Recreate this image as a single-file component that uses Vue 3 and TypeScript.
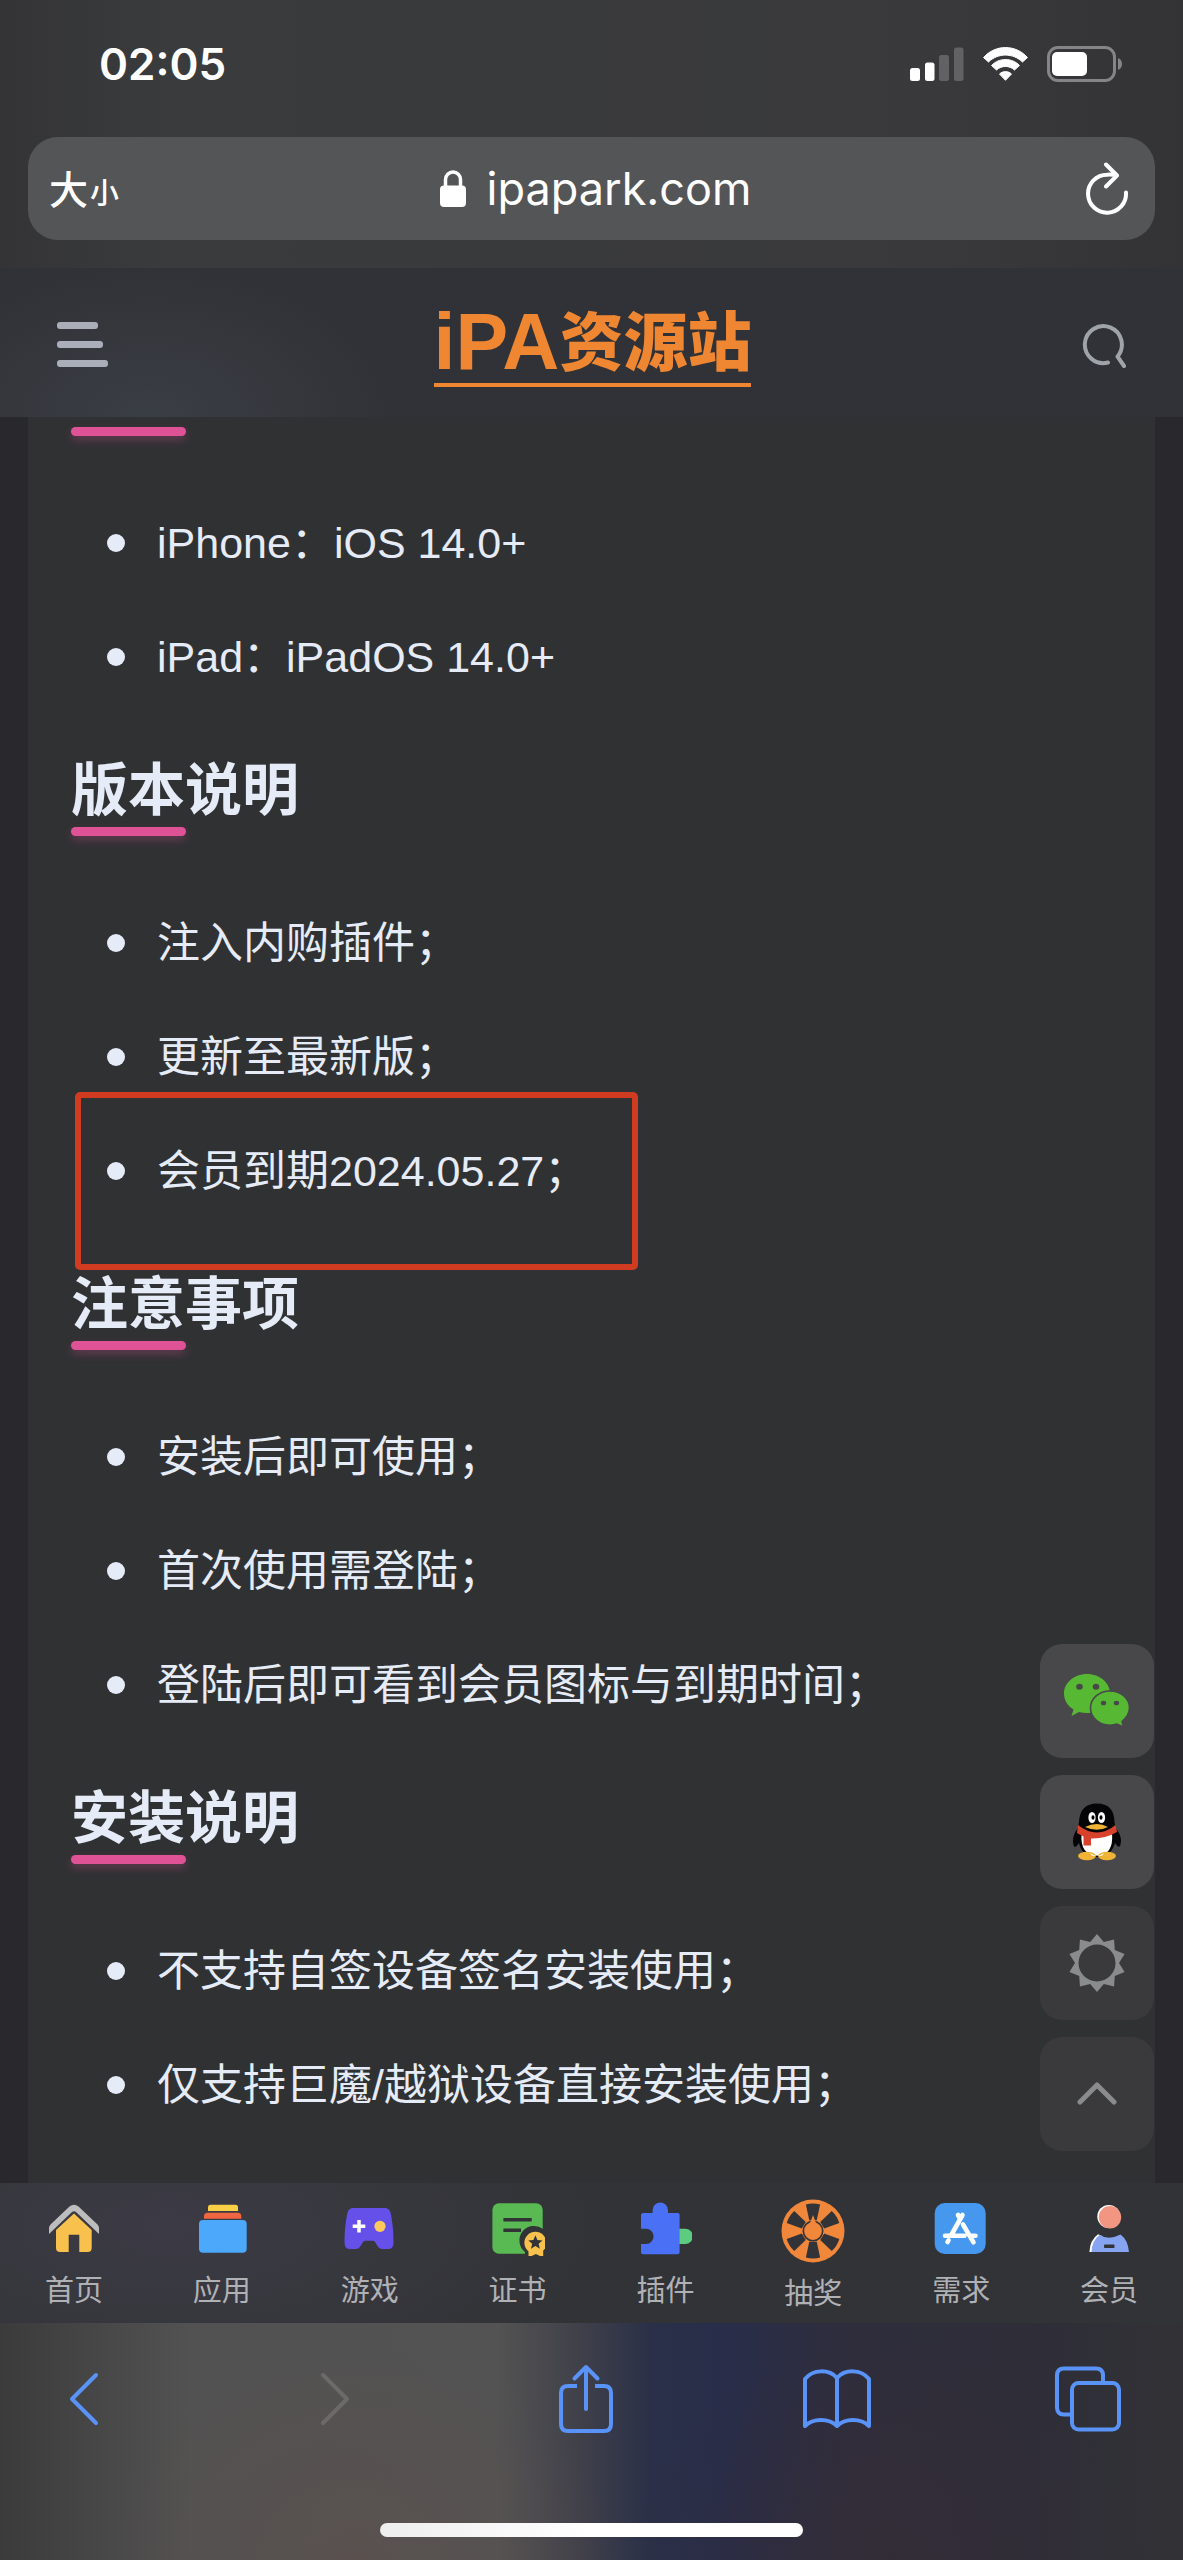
<script setup lang="ts">
interface Item {
  text: string
  marked?: boolean
}

interface Section {
  title: string
  items: Item[]
}

const requirements: string[] = ['iPhone：iOS 14.0+', 'iPad：iPadOS 14.0+']

const sections: Section[] = [
  {
    title: '版本说明',
    items: [
      { text: '注入内购插件；' },
      { text: '更新至最新版；' },
      { text: '会员到期2024.05.27；', marked: true },
    ],
  },
  {
    title: '注意事项',
    items: [
      { text: '安装后即可使用；' },
      { text: '首次使用需登陆；' },
      { text: '登陆后即可看到会员图标与到期时间；' },
    ],
  },
  {
    title: '安装说明',
    items: [
      { text: '不支持自签设备签名安装使用；' },
      { text: '仅支持巨魔/越狱设备直接安装使用；' },
    ],
  },
]

function polar(cx: number, cy: number, r: number, deg: number): string {
  const a = (deg * Math.PI) / 180
  return `${(cx + r * Math.sin(a)).toFixed(2)} ${(cy - r * Math.cos(a)).toFixed(2)}`
}

function star(cx: number, cy: number, outer: number, inner: number, points: number): string {
  const step = 180 / points
  const pts: string[] = []
  for (let i = 0; i < points * 2; i++) {
    pts.push(polar(cx, cy, i % 2 === 0 ? outer : inner, i * step))
  }
  return `M${pts.join('L')}Z`
}

// Ten-pointed sun with a round hole
const sun = `${star(29, 29, 29, 22, 10)}M29 10.5a18.5 18.5 0 1 0 0 37a18.5 18.5 0 1 0 0-37Z`
const badgeStar = star(44.4, 40.7, 7.5, 3.4, 5)

// Openings between the spokes of the prize wheel
const openings = [0, 58, 122, 180, 238, 302].map(
  (a) =>
    `M${polar(32, 32, 11.5, a - 19)}L${polar(32, 32, 27.5, a - 15)}A27.5 27.5 0 0 1 ${polar(32, 32, 27.5, a + 15)}L${polar(32, 32, 11.5, a + 19)}Z`,
).join('')
</script>

<template>
  <div class="page">
    <div class="browser-top">
      <div class="status">
        <span class="time">02:05</span>
        <div class="status-icons">
          <svg width="54" height="36" viewBox="0 0 54 36" fill="#fff">
            <rect x="0" y="22" width="10" height="13" rx="2.5" />
            <rect x="15" y="16.500" width="9.500" height="18.500" rx="2.500" />
            <rect x="29" y="9" width="10" height="26" rx="2.500" fill="#626264" />
            <rect x="44" y="1.500" width="9.500" height="33.500" rx="2.500" fill="#626264" />
          </svg>
          <svg width="45" height="36" viewBox="0 -1 45 36" fill="#fff" stroke="#fff" stroke-width="1" stroke-linejoin="round">
            <path d="M.5 10.500C12.500-2.800 32.500-2.800 44.500 10.500L39.500 15C30 5.800 15 5.800 5.500 15Z" />
            <path d="M8.500 18.500C16 10.500 29 10.500 36.500 18.500L31.500 23C26.500 18.300 18.500 18.300 13.500 23Z" />
            <path d="M16.500 27C20 23.800 25 23.800 28.500 27L22.500 33.300Z" />
          </svg>
          <svg width="75" height="36" viewBox="0 0 75 36">
            <rect x="1.500" y="1.500" width="66" height="33" rx="9.500" fill="none" stroke="#858587" stroke-width="3" />
            <rect x="5" y="6" width="35" height="24" rx="5" fill="#fff" />
            <path d="M71 12Q75 13.500 75 18Q75 22.500 71 24Z" fill="#858587" />
          </svg>
        </div>
      </div>
      <div class="address">
        <button class="text-size" type="button"><span class="large">大</span><span class="small">小</span></button>
        <button class="host" type="button">
          <svg width="26" height="37" viewBox="0 0 26 37">
            <rect y="15.500" width="26" height="21.500" rx="4" fill="#fff" />
            <path d="M5.500 17V9.500a7.500 7.500 0 0 1 15 0V17" fill="none" stroke="#fff" stroke-width="3.500" />
          </svg>
          <span>ipapark.com</span>
        </button>
        <button class="reload" type="button" aria-label="刷新">
          <svg width="44" height="54" viewBox="0 0 44 54" fill="none" stroke="#fff" stroke-width="4" stroke-linecap="round" stroke-linejoin="round">
            <path d="M41 30.500A19 19 0 1 1 22 12.700Q27 12.300 31 13.300M21 2.500L32 13.500L21 24.500" />
          </svg>
        </button>
      </div>
    </div>

    <header class="site-header">
      <button class="menu" type="button" aria-label="菜单"><i></i><i></i><i></i></button>
      <a class="logo" href="#"><span class="logo-latin">iPA</span><span class="logo-han">资源站</span></a>
      <button class="search" type="button" aria-label="搜索">
        <svg width="46" height="46" viewBox="0 0 46 46" fill="none" stroke="#9fa4ab" stroke-width="4" stroke-linecap="round" stroke-linejoin="round">
          <path d="M26 40.500A18.500 18.500 0 1 1 35.500 34.500L42 44" />
        </svg>
      </button>
    </header>

    <main class="body">
      <article class="card">
        <section>
          <div class="rule"></div>
          <ul>
            <li v-for="item in requirements" :key="item">{{ item }}</li>
          </ul>
        </section>
        <section v-for="section in sections" :key="section.title">
          <h2>{{ section.title }}</h2>
          <ul>
            <li v-for="item in section.items" :key="item.text" :class="{ marked: item.marked }">{{ item.text }}</li>
          </ul>
        </section>
      </article>

      <aside class="floating">
        <button type="button" aria-label="微信">
          <svg width="66" height="54" viewBox="0 0 66 54">
            <path d="M23 0C36 0 46 9 46 19.500S36 39 23 39Q19 39 15 38L7.500 42L9.500 35.500C3.500 32 0 26 0 19.500C0 9 10 0 23 0Z" fill="#57b933" />
            <ellipse cx="15.500" cy="12.700" rx="3.300" ry="3" fill="#48484a" />
            <ellipse cx="32" cy="12.700" rx="3.300" ry="3" fill="#48484a" />
            <path d="M46 17C57 17 65.500 24.500 65.500 34Q65.500 41 58 47.500L59.500 53L53 50Q50 51.200 46 51.200C35 51.200 26.500 43.500 26.500 34S35 17 46 17Z" fill="#57b933" stroke="#48484a" stroke-width="1.600" />
            <ellipse cx="39.500" cy="29" rx="2.700" ry="2.300" fill="#48484a" />
            <ellipse cx="52.500" cy="29" rx="2.700" ry="2.300" fill="#48484a" />
          </svg>
        </button>
        <button type="button" aria-label="QQ">
          <svg width="48" height="58" viewBox="0 0 48 58">
            <path d="M5 25Q0 31 0 38Q0 43 2 44Q4 43 6 40Q9 54 24 54Q38 54 42 40Q44 43 46 44Q48 42 48 38Q48 31 42.500 25L41.500 19Q41 .500 24 .500Q7 .500 6 19Z" fill="#050507" />
            <path d="M8.500 31Q24 36 39 30Q41 52 24 52.500Q7 52 8.500 31Z" fill="#fff" />
            <ellipse cx="14" cy="53" rx="9" ry="4.200" fill="#efb336" />
            <ellipse cx="34" cy="53" rx="9" ry="4.200" fill="#efb336" />
            <path d="M17 50Q24 55 31 50L29 52.800H19Z" fill="#fff" />
            <ellipse cx="19" cy="14.500" rx="3.600" ry="5.500" fill="#fff" />
            <ellipse cx="28.500" cy="14.500" rx="3.600" ry="5.500" fill="#fff" />
            <ellipse cx="20" cy="14.500" rx="1.500" ry="2.200" />
            <ellipse cx="28" cy="14.500" rx="1.500" ry="2.200" />
            <path d="M12 24Q24 18 35 24Q24 29.500 12 24Z" fill="#efb336" />
            <path d="M5 22Q24 37 42.500 22L44 29Q32 36 18 35.500V42.500H10.500V33.500L4 30Z" fill="#d8412c" />
          </svg>
        </button>
        <button class="dim" type="button" aria-label="切换主题">
          <svg width="58" height="58" viewBox="0 0 58 58"><path :d="sun" fill="#8a8b8d" fill-rule="evenodd" /></svg>
        </button>
        <button class="dim" type="button" aria-label="返回顶部">
          <svg width="40" height="24" viewBox="0 0 40 24" fill="none" stroke="#8a8b8d" stroke-width="5" stroke-linecap="round" stroke-linejoin="round">
            <path d="M3 20L20 3L37 20" />
          </svg>
        </button>
      </aside>
    </main>

    <nav class="tabs">
      <a href="#">
        <svg width="54" height="54" viewBox="0 0 54 54">
          <path d="M2 32V26Q2 24 3.500 22.500L22.500 4.500Q27 1 31.500 4.500L50.500 22.500Q52 24 52 26V32L29 10Q27 8.300 25 10Z" fill="#bdbdbd" />
          <path d="M27 11.500L44.700 28V46Q44.700 50 40.700 50H32.300V32.700H21.700V50H13Q9 50 9 46V28Z" fill="#f8c04c" />
        </svg>
        <span>首页</span>
      </a>
      <a href="#">
        <svg width="54" height="54" viewBox="0 0 54 54">
          <path d="M15.500 2.700H40.500Q43 2.700 43 5.500V9H13V5.500Q13 2.700 15.500 2.700Z" fill="#f9cf45" />
          <path d="M12.500 10.700H43Q46 10.700 46.300 14V16.700H9V14Q9.500 10.700 12.500 10.700Z" fill="#ef6640" />
          <rect x="4" y="18" width="47.700" height="32.700" rx="4" fill="#4ba8fb" />
        </svg>
        <span>应用</span>
      </a>
      <a href="#">
        <svg width="54" height="54" viewBox="0 0 54 54">
          <path d="M10 6H42Q46 6 47.500 10.500Q50.500 24 50.500 40Q50.500 47 46 47H38.500Q36 47 34.500 44L32 40Q31 38.700 29.500 38.700H22.500Q21 38.700 20 40L17.500 44Q16 47 13.500 47H6Q1.500 47 1.500 40Q1.500 24 4.500 10.500Q6 6 10 6Z" fill="#6550e9" />
          <path d="M16 18V30.600M9.700 24.300H22.300" stroke="#fff" stroke-width="3.500" />
          <circle cx="37" cy="24.300" r="5.600" fill="#fbc95c" />
        </svg>
        <span>游戏</span>
      </a>
      <a href="#">
        <svg width="54" height="54" viewBox="0 0 54 54">
          <rect x="1.400" y="1.300" width="50.300" height="50.400" rx="6.500" fill="#59b952" />
          <path d="M12.400 17.700H40.700M12.400 28.300H30" stroke="#323337" stroke-width="3.400" />
          <path d="M34 53V50A14 14 0 1 1 52 27V53Z" fill="#323337" />
          <path d="M37.500 47.500V55.500L44.900 52L52.200 55.500V47.500Z" fill="#f8c04c" />
          <circle cx="44.400" cy="40.700" r="11" fill="#f8c04c" />
          <path :d="badgeStar" fill="#323337" />
        </svg>
        <span>证书</span>
      </a>
      <a href="#">
        <svg width="54" height="54" viewBox="0 0 54 54">
          <path d="M41 26.700H47.300a7.650 7.650 0 0 1 0 15.300H41Z" fill="#5dcb80" />
          <path d="M5.500 11H14.600V8.300a7.700 7.700 0 0 1 15.400 0V11H39.600Q41.600 11 41.600 13V50.300Q41.600 52.300 39.600 52.300H5Q3 52.300 3 50.300V42H8a7.650 7.650 0 0 0 0-15.300H3V13Q3 11 5.500 11Z" fill="#4a70f5" />
        </svg>
        <span>插件</span>
      </a>
      <a href="#">
        <svg class="wheel" width="64" height="64" viewBox="0 0 64 64">
          <circle cx="32" cy="32" r="31.500" fill="#f0873a" />
          <path :d="openings" fill="#323337" />
          <circle cx="32" cy="32" r="9.700" fill="#f0873a" stroke="#323337" stroke-width="1.600" />
          <path d="M29 24L32 16L35 24Z" fill="#f0873a" />
        </svg>
        <span>抽奖</span>
      </a>
      <a href="#">
        <svg width="54" height="54" viewBox="0 0 54 54" fill="none" stroke="#fff" stroke-linecap="round">
          <rect x=".7" y="1" width="51" height="51" rx="10" fill="#4598ee" stroke="none" />
          <path d="M28.500 13L17 33.500M24 13L26 16.500M29 22.500L39.500 40.300M11 33.700H30.500M36 33.700H41.500M14.500 38.300L13.500 40" stroke-width="4.600" />
        </svg>
        <span>需求</span>
      </a>
      <a href="#">
        <svg width="54" height="54" viewBox="0 0 54 54">
          <circle cx="26.800" cy="14.500" r="11.500" fill="#fff" />
          <circle cx="28" cy="15.300" r="11.200" fill="#f29682" />
          <path d="M16 32.300Q8 38 7.400 50H30L20 34Z" fill="#fff" />
          <path d="M17.500 33Q27 38.500 38.500 32.500Q46 38 47 50H9.500Q10 38.500 17.500 33Z" fill="#87a4f1" />
          <rect x="22" y="42.600" width="10.500" height="3.500" rx=".8" fill="#323337" />
        </svg>
        <span>会员</span>
      </a>
    </nav>

    <footer class="browser-bottom">
      <div class="toolbar">
        <button type="button" aria-label="后退">
          <svg width="30" height="54" viewBox="0 0 30 54"><path d="M27 3L3 27L27 51" /></svg>
        </button>
        <button type="button" aria-label="前进" disabled>
          <svg width="30" height="54" viewBox="0 0 30 54"><path d="M3 3L27 27L3 51" /></svg>
        </button>
        <button type="button" aria-label="分享">
          <svg width="54" height="70" viewBox="0 0 54 70">
            <path d="M18 22H9Q2 22 2 29V60Q2 67 9 67H45Q52 67 52 60V29Q52 22 45 22H36" stroke-linecap="butt" />
            <path d="M27 45V3M15.500 14.500L27 3L38.500 14.500" />
          </svg>
        </button>
        <button type="button" aria-label="书签">
          <svg width="68" height="60" viewBox="0 0 68 60">
            <path d="M2 57V10C10 0 26 0 34 9C42 0 58 0 66 10V57C58 49 42 49 34 57C26 49 10 49 2 57ZM34 9V57" />
          </svg>
        </button>
        <button type="button" aria-label="标签页">
          <svg width="66" height="66" viewBox="0 0 66 66">
            <path d="M15 48.500H9Q2 48.500 2 41.500V9.500Q2 2.500 9 2.500H41Q48 2.500 48 9.500V15" stroke-linecap="butt" />
            <rect x="17" y="17" width="47" height="46.500" rx="6.500" />
          </svg>
        </button>
      </div>
      <div class="home-indicator"></div>
    </footer>
  </div>
</template>

<style>
body {
  margin: 0;
  background: #29282d;
}
</style>

<style scoped>
*,
*::before,
*::after {
  box-sizing: border-box;
}

button {
  margin: 0;
  padding: 0;
  border: 0;
  background: none;
  color: inherit;
  font: inherit;
}

a {
  color: inherit;
  text-decoration: none;
}

svg {
  display: block;
  flex: none;
}

.page {
  display: flex;
  flex-direction: column;
  min-height: 100vh;
  font-family: "Liberation Sans", "Noto Sans CJK SC", sans-serif;
  color: #e5ebf7;
  background: #29282d;
}

.browser-top {
  padding: 0 28px 28px;
  background: linear-gradient(90deg, #343436, #3a3b3d 14%, #39393b 80%, #333335);
  color: #fff;
}

.status {
  display: flex;
  align-items: center;
  justify-content: space-between;
  height: 137px;
  padding: 0 33px 9px 71px;
}

.time {
  font: 600 44px/56px Inter, sans-serif;
}

.status-icons {
  display: flex;
  align-items: center;
  gap: 19px;
}

.address {
  display: grid;
  grid-template-columns: 1fr auto 1fr;
  align-items: center;
  height: 103px;
  padding: 0 26px 0 21px;
  border-radius: 30px;
  background: #545557;
}

.text-size {
  display: flex;
  align-items: baseline;
  gap: 2px;
  justify-self: start;
  font-family: "Noto Sans CJK SC", sans-serif;
  font-weight: 500;
}

.large {
  font-size: 39px;
  line-height: 56px;
}

.small {
  font-size: 29px;
  line-height: 56px;
}

.host {
  display: flex;
  align-items: center;
  gap: 21px;
  padding-left: 13px;
  font: 400 45px/60px Inter, sans-serif;
}

.reload {
  justify-self: end;
}

.site-header {
  display: grid;
  grid-template-columns: 1fr auto 1fr;
  align-items: center;
  height: 149px;
  padding: 4px 55px 0 57px;
  background: radial-gradient(ellipse 240px 150px at 150px 100%, #3a3e45, #313237);
}

.menu {
  display: flex;
  flex-direction: column;
  gap: 12px;
  justify-self: start;
}

.menu i {
  width: 41px;
  height: 7px;
  border-radius: 3px;
  background: #a9aeb9;
}

.menu i:nth-child(2) {
  width: 46px;
}

.menu i:nth-child(3) {
  width: 51px;
}

.logo {
  display: flex;
  align-items: flex-start;
  height: 84px;
  border-bottom: 4px solid #ef8732;
  color: #ef8732;
}

.logo-latin {
  font-size: 79px;
  font-weight: 700;
  line-height: 78px;
}

.logo-han {
  font-family: "Noto Sans CJK SC", sans-serif;
  font-size: 64px;
  font-weight: 900;
  line-height: 68px;
}

.search {
  justify-self: end;
}

.body {
  position: relative;
  display: flex;
  flex: 1;
  padding: 0 28px;
}

.card {
  flex: 1;
  padding: 10px 43px 0;
  background: #303133;
}

.rule,
h2::after {
  display: block;
  width: 115px;
  height: 9px;
  border-radius: 5px;
  background: #df5396;
  box-shadow: 0 4px 8px rgba(223, 83, 150, 0.3);
}

h2 {
  position: relative;
  margin: 0;
  padding-bottom: 6px;
  font-size: 57px;
  font-weight: 700;
  line-height: 80px;
}

h2::after {
  content: "";
  position: absolute;
  bottom: 0;
  left: 0;
}

ul {
  display: flex;
  flex-direction: column;
  gap: 40px;
  margin: 0;
  padding: 70px 0 56px 36px;
  list-style: none;
}

li {
  position: relative;
  display: flex;
  align-items: center;
  gap: 32px;
  font-size: 43px;
  line-height: 74px;
}

li::before {
  content: "";
  flex: none;
  width: 18px;
  height: 18px;
  border-radius: 50%;
  background: #e5ebf7;
}

.marked::after {
  content: "";
  position: absolute;
  top: -42px;
  left: -32px;
  width: 563px;
  height: 178px;
  border: 6px solid #d13b22;
  border-radius: 5px;
}

.floating {
  position: absolute;
  right: 29px;
  bottom: 32px;
  display: flex;
  flex-direction: column;
  gap: 17px;
}

.floating button {
  display: flex;
  align-items: center;
  justify-content: center;
  width: 114px;
  height: 114px;
  border-radius: 22px;
  background: #48484a;
}

.floating .dim {
  background: #3a3a3c;
}

.tabs {
  display: grid;
  grid-template-columns: repeat(8, 1fr);
  height: 140px;
  padding-top: 19px;
  background: radial-gradient(ellipse 420px 180px at 170px 30%, #3c3b45, #323337);
  color: #b0b1b5;
}

.tabs a {
  display: flex;
  flex-direction: column;
  align-items: center;
  gap: 14px;
  font-size: 29px;
  line-height: 42px;
}

.wheel {
  margin: -3px 0 -4px;
}

.browser-bottom {
  display: flex;
  flex-direction: column;
  align-items: center;
  justify-content: space-between;
  height: 237px;
  padding: 41px 61px 23px 50px;
  background:
    radial-gradient(ellipse 260px 220px at 30% 100%, rgba(94, 80, 76, 0.6), rgba(94, 80, 76, 0)),
    radial-gradient(ellipse 260px 220px at 75% 100%, rgba(54, 44, 52, 0.6), rgba(54, 44, 52, 0)),
    linear-gradient(90deg, #3b3b3b, #525252 16%, #535353 42%, #40404a 49%, #2a3048 55%, #282d4a 61%, #2f2d3c 72%, #2e2d38 86%, #323236);
}

.toolbar {
  display: flex;
  justify-content: space-between;
  width: 100%;
}

.toolbar button {
  display: flex;
  align-items: center;
  justify-content: center;
  width: 68px;
  height: 70px;
}

.toolbar svg {
  fill: none;
  stroke: #5a93f8;
  stroke-width: 4;
  stroke-linecap: round;
  stroke-linejoin: round;
}

.toolbar button:disabled svg {
  stroke: #6c6a69;
}

.home-indicator {
  align-self: center;
  width: 423px;
  height: 14px;
  margin-left: 11px;
  border-radius: 7px;
  background: linear-gradient(90deg, #eeeeee, #ffffff 50%);
}
</style>
